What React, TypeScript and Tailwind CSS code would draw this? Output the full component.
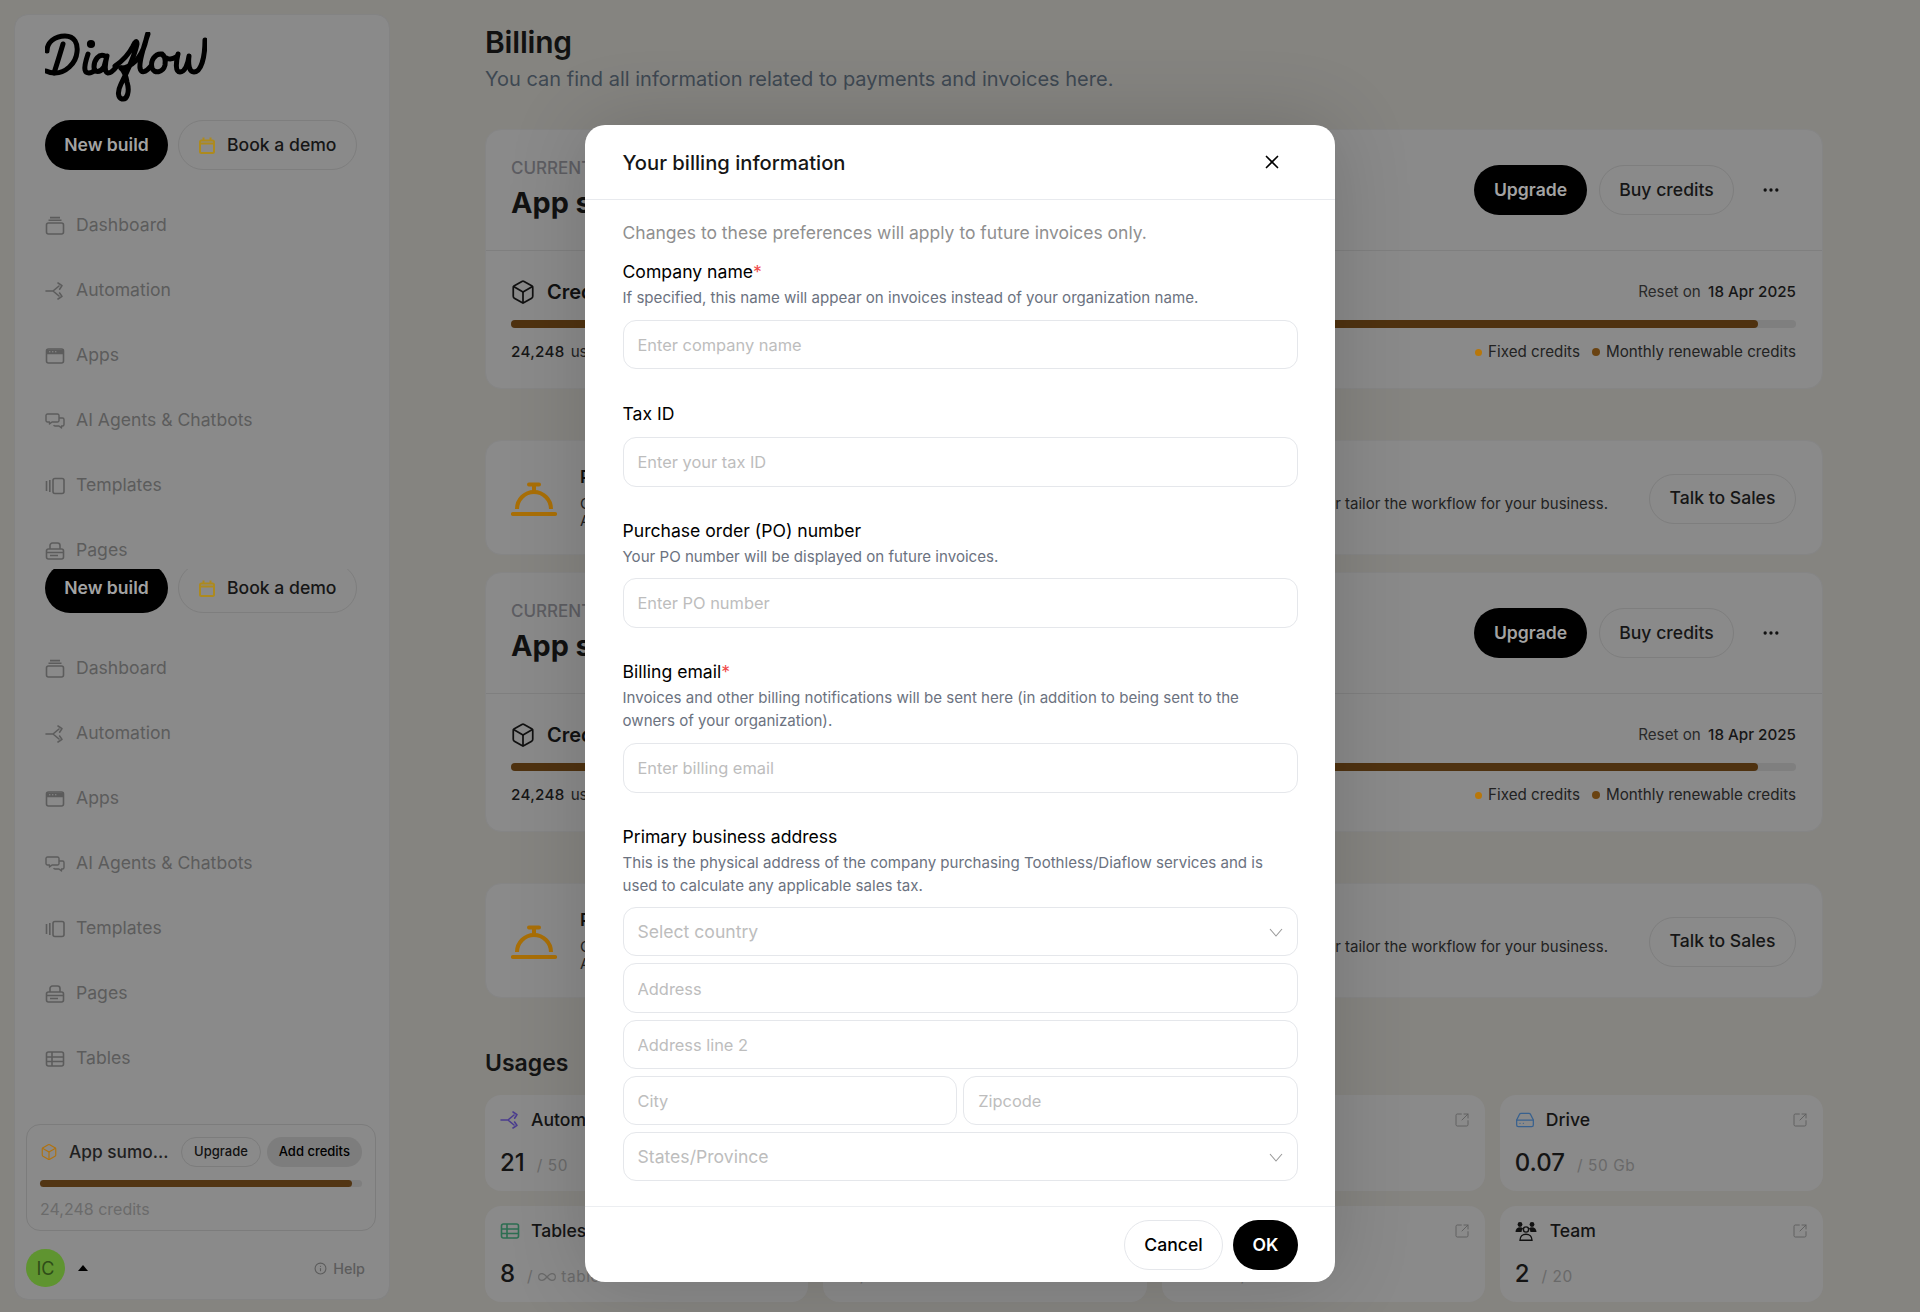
import React from 'react';
import { X, Ellipsis, Box, HardDrive, SquareArrowOutUpRight, Info, Infinity as InfinityIcon } from 'lucide-react';

const Logo = () => (
  <svg width="162" height="70" viewBox="0 0 162 70" fill="none" stroke="#000" strokeWidth="5" strokeLinecap="round" strokeLinejoin="round">
    <path d="M2 19C2 10 10 4 20 4C30 4 33 12 32 20C31 32 20 41 10 41C6 41 3 40 1 39" />
    <path d="M18 12C15 22 12 32 9 41" />
    <path d="M43 22C41 28 39 34 40 38C41 42 46 42 50 38" />
    <circle cx="46" cy="12" r="1.6" fill="#000" />
    <path d="M60 24C54 21 49 28 49 35C49 41 55 41 59 35L62 24C60 32 59 40 63 41C66 41 69 38 72 34" />
    <path d="M70 34C76 30 84 22 88 14C90 9 92 8 92 12C90 22 82 40 76 52C72 60 73 66 77 67C82 68 85 60 82 50C81 44 78 38 76 36" />
    <path d="M76 36C86 36 96 26 100 12C102 4 103 0 103 2C99 14 94 28 95 36C96 42 101 40 105 35" />
    <path d="M117 22C110 21 105 29 107 36C109 42 118 41 120 33C121 27 119 23 117 22C120 28 127 28 131 25" />
    <path d="M133 22C131 30 130 40 135 40C140 40 143 32 144 24C143 32 144 40 149 40C156 40 160 26 160 8" />
  </svg>
);

const DashboardIcon = () => (
  <svg width="20" height="20" viewBox="0 0 20 20" fill="none" stroke="currentColor" strokeWidth="1.6">
    <rect x="1.5" y="7" width="17" height="11" rx="2" />
    <path d="M3.5 4.2h13M5 1.6h10" />
  </svg>
);

const FlowIcon = ({ size = 20 }: { size?: number }) => (
  <svg width={size} height={size} viewBox="0 0 20 20" fill="none" stroke="currentColor" strokeWidth="1.6" strokeLinecap="round" strokeLinejoin="round">
    <path d="M1 10h7l6-5M8 10l6 5" />
    <path d="M13 2l4 2.6-2.4 3.6M14.6 12l2.4 3.4-4 2.6" />
  </svg>
);

const AppsIcon = () => (
  <svg width="20" height="20" viewBox="0 0 20 20" fill="none" stroke="currentColor" strokeWidth="1.6">
    <rect x="1.5" y="3" width="17" height="14" rx="2" />
    <path d="M2 4.5h16v3H2z" fill="currentColor" />
    <path d="M4 5.8h1.4M7 5.8h1.4M10 5.8h1.4" stroke="#8a8a8a" strokeWidth="1.1" />
  </svg>
);

const ChatIcon = () => (
  <svg width="20" height="20" viewBox="0 0 20 20" fill="none" stroke="currentColor" strokeWidth="1.4" strokeLinejoin="round">
    <path d="M2.5 3h10a1.5 1.5 0 0 1 1.5 1.5v5a1.5 1.5 0 0 1-1.5 1.5H7l-2.5 2v-2h-2A1.5 1.5 0 0 1 1 9.5v-5A1.5 1.5 0 0 1 2.5 3z" />
    <path d="M14 7h3.5A1.5 1.5 0 0 1 19 8.5v5a1.5 1.5 0 0 1-1.5 1.5h-1v2L14 15h-4a1.5 1.5 0 0 1-1.3-1" />
  </svg>
);

const TemplatesIcon = () => (
  <svg width="20" height="20" viewBox="0 0 20 20" fill="none" stroke="currentColor" strokeWidth="1.6">
    <rect x="8" y="2.5" width="11" height="15" rx="2" />
    <path d="M1.5 5v10M4.8 4v12" />
  </svg>
);

const PagesIcon = () => (
  <svg width="20" height="20" viewBox="0 0 20 20" fill="none" stroke="currentColor" strokeWidth="1.6">
    <path d="M5 8V4.5A2.5 2.5 0 0 1 7.5 2h5A2.5 2.5 0 0 1 15 4.5V8" />
    <rect x="1.5" y="8" width="17" height="10" rx="2" />
    <path d="M1.5 11.5h17M5 14.5h8" />
  </svg>
);

const TablesIcon = ({ size = 20 }: { size?: number }) => (
  <svg width={size} height={size} viewBox="0 0 20 20" fill="none" stroke="currentColor" strokeWidth="1.6">
    <rect x="1.5" y="3" width="17" height="14" rx="2" />
    <path d="M1.5 8h17M1.5 12.5h17M7 3v14" />
  </svg>
);

const CalendarIcon = () => (
  <svg width="16" height="17" viewBox="0 0 16 17" fill="none" stroke="#ad8a1e" strokeWidth="2">
    <rect x="1" y="3.5" width="14" height="12.5" rx="1.5" />
    <path d="M1 6.5h14M4.5 0.5v3M11.5 0.5v3" />
  </svg>
);

const BellIcon = () => (
  <svg width="46" height="36" viewBox="0 0 46 36" fill="none" stroke="#a96f07" strokeLinecap="round" className="shrink-0">
    <path d="M2 33H44" strokeWidth="4.2" />
    <path d="M6 28A17 17 0 0 1 40 28" strokeWidth="4" strokeLinecap="butt" />
    <path d="M23 10V4M18 3.5H28" strokeWidth="4" />
  </svg>
);

const TeamIcon = () => (
  <svg width="22" height="20" viewBox="0 0 22 20" fill="#111">
    <circle cx="5" cy="3.5" r="2.4" />
    <circle cx="17" cy="3.5" r="2.4" />
    <path d="M0.5 11c0-3 2-4.8 4.5-4.8 1.3 0 2.4.4 3.2 1.2-1 .9-1.6 2.2-1.6 3.6z" />
    <path d="M21.5 11c0-3-2-4.8-4.5-4.8-1.3 0-2.4.4-3.2 1.2 1 .9 1.6 2.2 1.6 3.6z" />
    <circle cx="11" cy="8.5" r="2.6" fill="none" stroke="#111" strokeWidth="1.4" />
    <path d="M5 19.2c0-3.6 2.6-6 6-6s6 2.4 6 6z" fill="none" stroke="#111" strokeWidth="1.4" />
  </svg>
);

const Chevron = () => (
  <svg width="14" height="9" viewBox="0 0 14 9" fill="none" stroke="#9a9a9a" strokeWidth="1.1">
    <path d="M1 1l6 7 6-7" />
  </svg>
);

const navItems = [
  { label: 'Dashboard', icon: <DashboardIcon /> },
  { label: 'Automation', icon: <FlowIcon /> },
  { label: 'Apps', icon: <AppsIcon /> },
  { label: 'AI Agents & Chatbots', icon: <ChatIcon /> },
  { label: 'Templates', icon: <TemplatesIcon /> },
  { label: 'Pages', icon: <PagesIcon /> },
  { label: 'Tables', icon: <TablesIcon /> },
];

const SideButtons = () => (
  <div className="flex gap-[10px] h-[50px] shrink-0">
    <button className="w-[123px] h-[50px] rounded-full bg-black text-[#a3a3a3] text-[17.6px] font-semibold">New build</button>
    <button className="w-[179px] h-[50px] rounded-full border border-[#7e7e7e] flex items-center pl-[20px] gap-[12px] text-[#161616] text-[17.6px] font-medium">
      <CalendarIcon />
      Book a demo
    </button>
  </div>
);

const NavList = ({ items }: { items: typeof navItems }) => (
  <div className="flex flex-col">
    {items.map((item) => (
      <div key={item.label} className="h-[65px] shrink-0 flex items-center gap-[11px] text-[#5c5c5c] text-[17.6px]">
        <span className="w-[20px] flex justify-center">{item.icon}</span>
        {item.label}
      </div>
    ))}
  </div>
);

const Sidebar = () => (
  <aside className="w-[376px] h-[1286px] shrink-0 ml-[14px] mt-[14px] bg-[#8a8a8a] rounded-[14px] border border-[#838383] flex flex-col relative">
    <div className="pl-[30px] pt-[17px]">
      <Logo />
      <div className="mt-[18px]">
        <SideButtons />
      </div>
      <div className="mt-[23px] h-[376px] overflow-hidden">
        <NavList items={navItems.slice(0, 6)} />
      </div>
      <div className="h-[44px] overflow-hidden flex flex-col justify-end">
        <SideButtons />
      </div>
      <div className="mt-[23px]">
        <NavList items={navItems} />
      </div>
    </div>
    <div className="ml-[11px] mr-[13px] mt-auto h-[107px] rounded-[14px] border border-[#7c7c7c] px-[13px] pt-[12px]">
      <div className="flex items-center h-[30px]">
        <Box size={18} strokeWidth={1.5} className="text-[#b0720f] shrink-0" />
        <span className="ml-[11px] w-[113px] text-[17.3px] font-medium text-[#1f1f1f]">App sumo...</span>
        <span className="w-[80px] h-[30px] rounded-full border border-[#7c7c7c] flex items-center justify-center text-[13px] font-medium text-[#111]">Upgrade</span>
        <span className="ml-[6px] w-[96px] h-[30px] rounded-full bg-[#7d7d7d] flex items-center justify-center text-[13px] font-medium text-black">Add credits</span>
      </div>
      <div className="mt-[13px] h-[7px] rounded-full bg-[#7f7f7f]">
        <div className="h-full w-[312px] rounded-full bg-[#523513]" />
      </div>
      <div className="mt-[10px] text-[16px] text-[#6b6b6b]">24,248 credits</div>
    </div>
    <div className="mx-[11px] mt-[18px] mb-[12px] flex items-center h-[38px]">
      <div className="w-[39px] h-[38px] rounded-full bg-[#5f9430] flex items-center justify-center text-[#2f4d18] text-[18px]">IC</div>
      <span className="ml-[13px] w-0 h-0 border-x-[5px] border-x-transparent border-b-[6px] border-b-black" />
      <div className="ml-auto mr-[13px] pt-[1px] flex items-center gap-[6px] text-[#5c5c5c] text-[14.4px] font-medium">
        <Info size={13} />
        Help
      </div>
    </div>
  </aside>
);

const PlanCard = () => (
  <div className="h-[260px] rounded-[16px] bg-[#8a8a8a] border border-[#858585] flex flex-col">
    <div className="h-[121px] border-b border-[#7f7f7f] pl-[25px] pr-[41px] flex items-center justify-between">
      <div>
        <div className="text-[17px] font-medium text-[#5d5d62] leading-[22px]">CURRENT PLAN</div>
        <div className="text-[28.8px] font-bold text-[#111] leading-[40px] mt-[4px]">App sumo</div>
      </div>
      <div className="flex items-center">
        <button className="w-[113px] h-[50px] rounded-full bg-black text-[#a3a3a3] text-[17.6px] font-semibold">Upgrade</button>
        <button className="ml-[12px] w-[135px] h-[50px] rounded-full border border-[#7e7e7e] text-[#161616] text-[17.6px] font-medium">Buy credits</button>
        <Ellipsis size={20} className="ml-[27px] text-[#111]" />
      </div>
    </div>
    <div className="flex-1 pl-[25px] pr-[26px] pt-[27px]">
      <div className="flex items-center justify-between h-[28px]">
        <div className="flex items-center gap-[11px] text-[20px] font-semibold text-[#111]">
          <Box size={26} strokeWidth={1.6} className="-ml-[1px]" />
          Credits
        </div>
        <div className="text-[15.2px] text-[#2a2a2a]">
          Reset on <span className="ml-[3px] font-medium text-[#161616]">18 Apr 2025</span>
        </div>
      </div>
      <div className="mt-[14px] h-[8px] rounded-full bg-[#7f7f7f]">
        <div className="h-full w-[1247px] rounded-full bg-[#4f3210]" />
      </div>
      <div className="mt-[13px] flex items-center justify-between text-[15.2px]">
        <div className="text-[#222]"><span className="font-medium text-[#161616] tracking-[0.3px]">24,248</span><span className="ml-[6px]">used</span></div>
        <div className="flex items-center gap-[12px] text-[#222]">
          <span className="flex items-center gap-[6px]"><i className="w-[7px] h-[7px] rounded-full bg-[#b8770a]" />Fixed credits</span>
          <span className="flex items-center gap-[6px]"><i className="w-[8px] h-[8px] rounded-full bg-[#6a4312]" />Monthly renewable credits</span>
        </div>
      </div>
    </div>
  </div>
);

const SalesCard = () => (
  <div className="h-[115px] rounded-[16px] bg-[#8a8a8a] border border-[#858585] pl-[25px] pr-[26px] pt-[2px] flex items-center">
    <BellIcon />
    <div className="ml-[23px] flex-1 pr-[41px] -mt-[3px]">
      <div className="text-[17.6px] font-semibold text-[#111] leading-[24px]">Professional services</div>
      <div className="mt-[6px] text-[15px] text-[#222] leading-[17px]">
        <div className="flex justify-between">
          <span>Custom solutions</span>
          <span>Our experts can build or tailor the workflow for your business.</span>
        </div>
        <div>Available on request.</div>
      </div>
    </div>
    <button className="w-[147px] h-[50px] rounded-full border border-[#7e7e7e] text-[#161616] text-[17.6px] font-medium">Talk to Sales</button>
  </div>
);

const usages = [
  { title: 'Automation', icon: <span className="text-[#4b3d8f]"><FlowIcon /></span>, value: '21', rest: '/ 50', gap: 'gap-[11px]' },
  { title: 'Apps', icon: <AppsIcon />, value: '3', rest: '/ 10', gap: 'gap-[11px]' },
  { title: 'Pages', icon: <PagesIcon />, value: '1', rest: '/ 10', gap: 'gap-[11px]' },
  { title: 'Drive', icon: <HardDrive size={20} strokeWidth={1.5} className="text-[#38618f]" />, value: '0.07', rest: '/ 50 Gb', gap: 'gap-[11px]' },
  { title: 'Tables', icon: <span className="text-[#2d6e52]"><TablesIcon /></span>, value: '8', rest: 'tables', gap: 'gap-[11px]', infinite: true },
  { title: 'Knowledge', icon: <AppsIcon />, value: '1', rest: '/ 50 documents', gap: 'gap-[11px]' },
  { title: 'Storage', icon: <HardDrive size={20} />, value: '0.00', rest: '/ 50', gap: 'gap-[11px]' },
  { title: 'Team', icon: <TeamIcon />, value: '2', rest: '/ 20', gap: 'gap-[13px]' },
];

const UsageCard = ({ item }: { item: (typeof usages)[number] }) => (
  <div className="h-[96px] rounded-[16px] bg-[#8a8a8a] px-[15px] pt-[13px]">
    <div className="flex items-center h-[24px]">
      <div className={`flex items-center ${item.gap} text-[17.6px] font-medium text-[#141414]`}>
        {item.icon}
        {item.title}
      </div>
      <SquareArrowOutUpRight size={16} strokeWidth={1.4} className="ml-auto text-[#5f5f5f]" />
    </div>
    <div className="mt-[13px] flex items-baseline h-[36px]">
      <span className="text-[24px] font-medium text-[#141414]">{item.value}</span>
      <span className="ml-[12px] flex items-center gap-[4px] text-[15.4px] tracking-[0.6px] text-[#696969]">
        {item.infinite && <span>/</span>}
        {item.infinite && <InfinityIcon size={20} strokeWidth={1.4} />}
        {item.rest}
      </span>
    </div>
  </div>
);

const Main = () => (
  <main className="ml-[95px] w-[1338px] shrink-0">
    <div className="pt-[24px] h-[129px]">
      <h1 className="text-[30px] font-semibold text-[#111] leading-[36px] tracking-[-0.2px]">Billing</h1>
      <p className="mt-[4px] text-[20px] text-[#3e4852] leading-[30px]">You can find all information related to payments and invoices here.</p>
    </div>
    <PlanCard />
    <div className="mt-[51px]"><SalesCard /></div>
    <div className="mt-[17px]"><PlanCard /></div>
    <div className="mt-[51px]"><SalesCard /></div>
    <h2 className="mt-[47px] text-[23px] font-semibold text-[#141414] leading-[36px]">Usages</h2>
    <div className="mt-[14px] grid grid-cols-4 gap-[15px]">
      {usages.map((item) => (
        <UsageCard key={item.title} item={item} />
      ))}
    </div>
  </main>
);

const Field = ({ placeholder, className = '' }: { placeholder: string; className?: string }) => (
  <input
    placeholder={placeholder}
    className={`w-full min-w-0 rounded-[13px] border border-[#e5e7eb] px-[14px] text-[16.4px] outline-none placeholder:text-[#bdbdbd] ${className}`}
  />
);

const SelectField = ({ placeholder }: { placeholder: string }) => (
  <div className="h-[49.25px] w-full rounded-[13px] border border-[#e5e7eb] pl-[14px] pr-[14px] pt-[2px] flex items-center justify-between text-[17.6px] text-[#bdbdbd]">
    {placeholder}
    <Chevron />
  </div>
);

const Label = ({ text, required }: { text: string; required?: boolean }) => (
  <div className="text-[17.6px] font-normal text-black leading-[24px]">
    {text}
    {required && <span className="text-[#f04b4b]">*</span>}
  </div>
);

const Help = ({ children }: { children: React.ReactNode }) => (
  <p className="mt-[2px] max-w-[660px] text-[15.1px] text-[#6b7280] leading-[23px]">{children}</p>
);

const BillingModal = () => (
  <div className="absolute left-[585px] top-[125px] w-[750px] h-[1157px] rounded-[20px] bg-white shadow-[0_0_80px_rgba(0,0,0,0.16)] flex flex-col">
    <div className="h-[75px] shrink-0 border-b border-[#e8eaee] pl-[37.5px] pr-[52px] flex items-center justify-between">
      <h3 className="text-[20.2px] font-[550] text-[#161616] pt-[2px]">Your billing information</h3>
      <X size={22} strokeWidth={1.8} className="text-black" />
    </div>
    <div className="flex-1 pl-[37.5px] pr-[37px]">
      <p className="mt-[19px] text-[17.5px] text-[#8f8f8f] leading-[28px]">Changes to these preferences will apply to future invoices only.</p>
      <div className="mt-[13px]">
        <Label text="Company name" required />
        <Help>If specified, this name will appear on invoices instead of your organization name.</Help>
        <Field placeholder="Enter company name" className="mt-[11px] h-[49px]" />
      </div>
      <div className="mt-[33px]">
        <Label text="Tax ID" />
        <Field placeholder="Enter your tax ID" className="mt-[11px] h-[50px]" />
      </div>
      <div className="mt-[32px]">
        <Label text="Purchase order (PO) number" />
        <Help>Your PO number will be displayed on future invoices.</Help>
        <Field placeholder="Enter PO number" className="mt-[10px] h-[50px]" />
      </div>
      <div className="mt-[32px]">
        <Label text="Billing email" required />
        <Help>Invoices and other billing notifications will be sent here (in addition to being sent to the owners of your organization).</Help>
        <Field placeholder="Enter billing email" className="mt-[11px] h-[50px]" />
      </div>
      <div className="mt-[32px]">
        <Label text="Primary business address" />
        <Help>This is the physical address of the company purchasing Toothless/Diaflow services and is used to calculate any applicable sales tax.</Help>
        <div className="mt-[10px] flex flex-col gap-[7px]">
          <SelectField placeholder="Select country" />
          <Field placeholder="Address" className="h-[49.25px] pt-[2px]" />
          <Field placeholder="Address line 2" className="h-[49.25px] pt-[2px]" />
          <div className="flex gap-[6px]">
            <Field placeholder="City" className="h-[49.25px] pt-[2px]" />
            <Field placeholder="Zipcode" className="h-[49.25px] pt-[2px]" />
          </div>
          <SelectField placeholder="States/Province" />
        </div>
      </div>
    </div>
    <div className="h-[76px] shrink-0 border-t border-[#eceef1] pr-[37px] pt-[1px] flex items-center justify-end gap-[10px]">
      <button className="w-[99px] h-[50px] rounded-full border border-[#e5e7eb] text-[17.6px] font-medium text-black">Cancel</button>
      <button className="w-[65px] h-[50px] rounded-full bg-black text-[17.6px] font-semibold text-white">OK</button>
    </div>
  </div>
);

export default function App() {
  return (
    <div className="relative w-full h-[1312px] overflow-hidden bg-[#858480] flex font-['Inter',sans-serif]">
      <Sidebar />
      <Main />
      <BillingModal />
    </div>
  );
}
